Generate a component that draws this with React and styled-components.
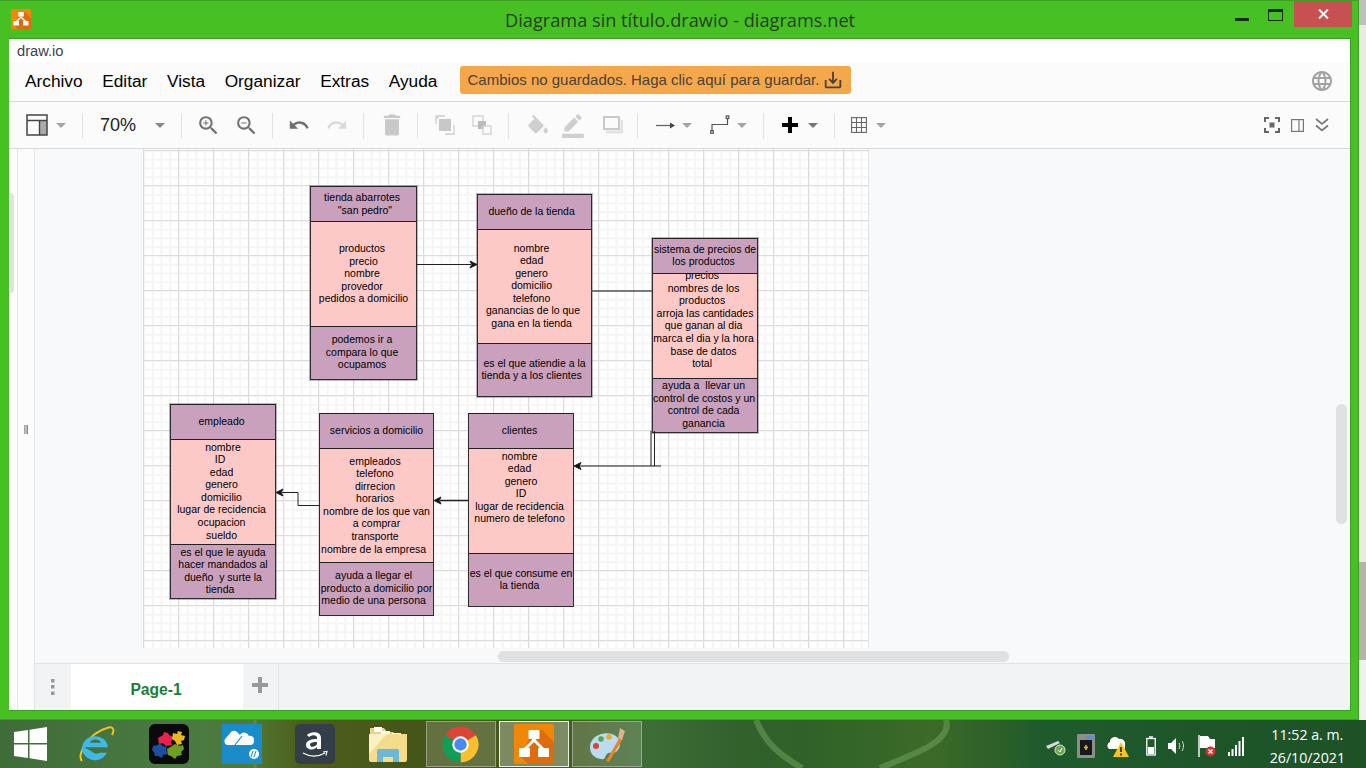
import React from 'react'
import styled, { createGlobalStyle } from 'styled-components'
import {
  MdZoomIn, MdZoomOut, MdUndo, MdRedo, MdDelete, MdBorderColor, MdLanguage, MdSaveAlt,
} from 'react-icons/md'

const GlobalStyle = createGlobalStyle`
  html, body { margin: 0; padding: 0; width: 1366px; height: 768px; overflow: hidden; }
  body { font-family: "Liberation Sans", Arial, sans-serif; }
  * { box-sizing: border-box; }
`

const Screen = styled.div`
  width: 1366px;
  height: 768px;
  display: flex;
  flex-direction: column;
`
const Desktop = styled.div`
  height: 720px;
  display: flex;
`
const Strip = styled.div`
  flex: 1;
  background: linear-gradient(#bfbfbf 0 25px, #ece8e4 25px 562px, #b9b2ac 562px 660px, #f0f0f0 660px);
`
const Window = styled.div`
  width: 1359px;
  display: flex;
  flex-direction: column;
  background: #46c023;
  border: 1px solid #3c9f24;
  border-left-width: 0;
  padding: 0 7px 8px 9px;
`
const TitleBar = styled.div`
  height: 37px;
  flex-shrink: 0;
  display: flex;
  align-items: flex-start;
  position: relative;
`
const AppIcon = styled.div`
  margin: 8px 0 0 2px;
  width: 20px;
  height: 20px;
`
const TitleText = styled.div`
  position: absolute;
  top: 7px;
  left: 496px;
  font-family: "Open Sans", sans-serif;
  font-size: 18.2px;
  line-height: 24px;
  color: #26401c;
  white-space: nowrap;
`
const Controls = styled.div`
  margin-left: auto;
  display: flex;
`
const MinBtn = styled.div`
  width: 14px;
  height: 3px;
  margin-top: 17px;
  margin-right: 19px;
  background: #1c2a18;
`
const MaxBtn = styled.div`
  width: 15px;
  height: 12px;
  margin-top: 8px;
  margin-right: 11px;
  border: 1px solid #1c2a18;
  border-top-width: 3px;
`
const CloseBtn = styled.div`
  width: 58px;
  height: 26px;
  background: #c75050;
  display: flex;
  align-items: center;
  justify-content: center;
  margin-right: -1px;
`
const Client = styled.div`
  flex: 1;
  display: flex;
  flex-direction: column;
  min-height: 0;
  background: #fff;
  border: 1px solid #3c9f24;
  border-width: 1px 1px 1px 0;
`
const UrlRow = styled.div`
  height: 24px;
  flex-shrink: 0;
  padding-left: 8px;
  font-size: 14.7px;
  line-height: 25px;
  color: #3a4350;
  background: #fff;
`
const MenuBar = styled.div`
  height: 39px;
  flex-shrink: 0;
  display: flex;
  align-items: center;
  padding: 0 0 2px 16px;
  gap: 19.6px;
  background: #fbfbfb;
  border-bottom: 1px solid #dadada;
`
const MenuItem = styled.div`
  font-size: 17.3px;
  color: #000;
  white-space: nowrap;
`
const SaveBanner = styled.div`
  width: 391px;
  height: 28px;
  margin-left: 2.5px;
  margin-bottom: 3px;
  padding: 0 7px 0 8px;
  border-radius: 3px;
  background: #f5a84b;
  color: #4a4238;
  font-size: 15px;
  display: flex;
  align-items: center;
  justify-content: space-between;
  white-space: nowrap;
`
const GlobeWrap = styled.div`
  margin-left: auto;
  margin-right: 16px;
  color: #a2a2a2;
  display: flex;
`
const Toolbar = styled.div`
  height: 47px;
  flex-shrink: 0;
  display: flex;
  align-items: center;
  background: #fbfbfb;
  border-bottom: 1px solid #d8d8d8;
`
const Tool = styled.div`
  flex-shrink: 0;
  width: ${p => p.$w}px;
  margin-left: ${p => p.$ml}px;
  height: 26px;
  display: flex;
  align-items: center;
  justify-content: center;
  color: ${p => p.$color || '#c9c9c9'};
  & > svg { flex-shrink: 0; }
`
const Caret = styled.div`
  width: 0;
  height: 0;
  border-left: 5.5px solid transparent;
  border-right: 5.5px solid transparent;
  border-top: 5px solid ${p => p.$color || '#a5a5a5'};
`
const Sep = styled.div`
  width: 1px;
  height: 25px;
  background: #e2e2e2;
`
const ZoomText = styled.div`
  font-size: 18px;
  color: #222;
  white-space: nowrap;
`
const Body = styled.div`
  flex: 1;
  display: flex;
  min-height: 0;
`
const Rail = styled.div`
  width: 9px;
  background: #fff;
  border-right: 1px solid #e4e4e4;
  padding-top: 44px;
`
const RailThumb = styled.div`
  width: 5px;
  height: 100px;
  background: #e2e2e2;
  border-radius: 0 4px 4px 0;
`
const Splitter = styled.div`
  width: 17px;
  background: #fcfcfc;
  border-right: 1px solid #e4e4e4;
  display: flex;
  align-items: center;
  justify-content: center;
`
const Handle = styled.div`
  width: 4px;
  height: 9px;
  background: linear-gradient(90deg, #999, #ccc 50%, #777);
`
const Main = styled.div`
  flex: 1;
  min-width: 0;
  display: flex;
  flex-direction: column;
`
const Canvas = styled.div`
  height: 514px;
  background: #f8f9fa;
  padding-left: 108px;
  position: relative;
  overflow: hidden;
`
const Page = styled.div`
  position: relative;
  width: 726px;
  height: 499px;
  border-left: 1px solid #dcdcdc;
  border-right: 1px solid #e4e4e4;
  background-color: #fff;
  background-image:
    linear-gradient(#dcdcdc 1px, transparent 1px),
    linear-gradient(90deg, #dcdcdc 1px, transparent 1px),
    linear-gradient(#f5f5f5 2px, transparent 2px),
    linear-gradient(90deg, #f5f5f5 2px, transparent 2px);
  background-size: 35px 35px, 35px 35px, 8.75px 8.75px, 8.75px 8.75px;
  background-position: 0 1px, -1px 0, 0 1px, -1px 0;
`
const Node = styled.div`
  position: absolute;
  left: ${p => p.$x - 144}px;
  top: ${p => p.$y - 149}px;
  width: ${p => p.$w}px;
  display: flex;
  flex-direction: column;
  border: 1px solid #2c2c2c;
  border-top: 0;
  outline: ${p => (p.$soft ? '1px solid rgba(60,60,60,.35)' : 'none')};
  color: #000;
  font-size: 10.5px;
  line-height: 12.6px;
  text-align: center;
  white-space: pre;
`
const Section = styled.div`
  height: ${p => p.$h}px;
  flex-shrink: 0;
  background: ${p => (p.$alt ? '#fdc9c7' : '#caa1bc')};
  border-top: 1px solid #222;
`
const Lines = styled.div`
  margin-top: ${p => p.$top - 1}px;
`
const Wires = styled.svg`
  position: absolute;
  left: 0;
  top: 0;
  pointer-events: none;
`
const ScrollV = styled.div`
  position: absolute;
  right: 3px;
  top: 255px;
  width: 11px;
  height: 120px;
  border-radius: 6px;
  background: #dfe1e3;
`
const ScrollH = styled.div`
  position: absolute;
  left: 463px;
  top: 502px;
  width: 511px;
  height: 11px;
  border-radius: 6px;
  background: #dfe1e3;
`
const Footer = styled.div`
  flex: 1;
  display: flex;
  background: #f1f3f4;
  border-top: 1px solid #e2e3e5;
`
const DotsCell = styled.div`
  width: 36px;
  display: flex;
  align-items: center;
  justify-content: center;
`
const PageTab = styled.div`
  width: 172px;
  background: #fff;
  color: #188038;
  font-weight: bold;
  font-size: 15.6px;
  display: flex;
  align-items: center;
  justify-content: center;
  padding: 5px 2px 0 0;
`
const AddCell = styled.div`
  width: 36px;
  border-right: 1px solid #e2e3e5;
  color: #999;
  display: flex;
  justify-content: center;
  padding: 13px 1px 0 0;
`
const Taskbar = styled.div`
  flex: 1;
  position: relative;
  display: flex;
  align-items: center;
  overflow: hidden;
  background: linear-gradient(90deg, #3f6c38 0, #4b7a42 190px, #4f7a35 250px, #4e5f1a 300px, #45561a 400px,
    #47591f 560px, #3f6d38 650px, #33612d 740px, #2f6228 800px, #3c6a28 930px, #2c6028 1000px, #1f5a2d 1040px, #1d5226 1366px);
`
const Backdrop = styled.svg`
  position: absolute;
  left: 0;
  top: 0;
`
const StartCell = styled.div`
  position: relative;
  width: 59px;
  padding-left: 14px;
  display: flex;
`
const Slot = styled.div`
  position: relative;
  width: 73px;
  height: 48px;
  display: flex;
  align-items: center;
  justify-content: center;
`
const ActiveBox = styled.div`
  position: relative;
  width: 70px;
  height: 46px;
  margin: 0 1.5px;
  display: flex;
  align-items: center;
  justify-content: center;
  background: ${p => (p.$focus ? 'rgba(255,255,255,.3)' : 'rgba(255,255,255,.16)')};
  border: 1px solid ${p => (p.$focus ? '#e8efe6' : 'rgba(255,255,255,.35)')};
`
const Tray = styled.div`
  position: relative;
  margin-left: auto;
  display: flex;
  align-items: center;
  padding-top: 4px;
`
const TrayIcon = styled.div`
  margin-left: ${p => p.$ml}px;
  display: flex;
`
const Clock = styled.div`
  margin-left: 26px;
  margin-right: 21px;
  margin-top: -1px;
  color: #fff;
  font-family: "Open Sans", sans-serif;
  font-size: 14.2px;
  line-height: 23px;
  text-align: center;
  white-space: nowrap;
`

const nodes = [
  { x: 310, w: 107, soft: true, ys: [186, 221, 326, 379], blocks: [
    { top: 5, lines: ['tienda abarrotes ', ' "san pedro"'] },
    { top: 21, lines: ['productos ', 'precio', 'nombre ', 'provedor ', 'pedidos a domicilio'] },
    { top: 7, lines: ['podemos ir a ', 'compara lo que ', 'ocupamos '] },
  ] },
  { x: 477, w: 115, soft: true, ys: [194, 229, 343, 396], blocks: [
    { top: 10.5, lines: ['dueño de la tienda  '] },
    { top: 12.5, lines: ['nombre  ', 'edad  ', 'genero  ', 'domicilio  ', 'telefono  ', 'ganancias de lo que ', 'gana en la tienda  '] },
    { top: 13.5, lines: ['es el que atiendie a la', 'tienda y a los clientes  '] },
  ] },
  { x: 652, w: 106, soft: true, ys: [238, 273, 378, 432], blocks: [
    { top: 4.5, lines: ['sistema de precios de', 'los productos '] },
    { top: -4, lines: ['precios  ', 'nombres de los ', 'productos  ', 'arroja las cantidades', 'que ganan al dia ', 'marca el dia y la hora ', 'base de datos ', 'total  '] },
    { top: 1, lines: ['ayuda a  llevar un ', 'control de costos y un ', 'control de cada ', 'ganancia '] },
  ] },
  { x: 170, w: 106, soft: true, ys: [404, 439, 544, 598], blocks: [
    { top: 10.5, lines: ['empleado '] },
    { top: 1.5, lines: ['nombre', 'ID  ', 'edad ', 'genero ', 'domicilio ', 'lugar de recidencia ', 'ocupacion ', 'sueldo '] },
    { top: 1.5, lines: ['es el que le ayuda', 'hacer mandados al', 'dueño  y surte la', 'tienda  '] },
  ] },
  { x: 319, w: 115, ys: [413, 448, 562, 615], blocks: [
    { top: 10.5, lines: ['servicios a domicilio'] },
    { top: 6.5, lines: ['empleados ', 'telefono ', 'dirrecion ', 'horarios ', 'nombre de los que van', 'a comprar', 'transporte ', 'nombre de la empresa  '] },
    { top: 7, lines: ['ayuda a llegar el  ', 'producto a domicilio por', 'medio de una persona  '] },
  ] },
  { x: 468, w: 106, ys: [413, 448, 553, 606], blocks: [
    { top: 10.5, lines: ['clientes '] },
    { top: 1.5, lines: ['nombre ', 'edad ', 'genero', 'ID', 'lugar de recidencia ', 'numero de telefono '] },
    { top: 13.5, lines: ['es el que consume en', 'la tienda '] },
  ] },
]

const ArrowHead = ({ x, y, dir }) => (
  <path
    d={dir === 'r'
      ? `M${x} ${y}l-7 -3.5 1.8 3.5 -1.8 3.5z`
      : `M${x} ${y}l7 -3.5 -1.8 3.5 1.8 3.5z`}
    fill="#111"
  />
)

const LayoutIcon = () => (
  <svg width="22" height="22" viewBox="0 0 22 22">
    <rect x="14" y="6" width="7" height="15" fill="#aaa" />
    <rect x="1" y="1" width="20" height="20" fill="none" stroke="#444" strokeWidth="1.5" />
    <path d="M1 6.5h20M13.5 6.5V21" stroke="#444" strokeWidth="1.4" />
  </svg>
)
const ToFrontIcon = () => (
  <svg width="20" height="20" viewBox="0 0 20 20" fill="none" stroke="#d0d0d0" strokeWidth="1.3">
    <path d="M1 9V1h9M10 19h9v-9" />
    <path d="M1 3h2M3 1v2" />
    <rect x="4" y="4" width="12" height="12" fill="#c8c8c8" stroke="none" />
  </svg>
)
const ToBackIcon = () => (
  <svg width="20" height="20" viewBox="0 0 20 20" fill="none" stroke="#d0d0d0" strokeWidth="1.3">
    <rect x="1" y="1" width="10" height="10" fill="#fbfbfb" />
    <rect x="6" y="6" width="8" height="8" fill="#bbb" stroke="none" />
    <rect x="11" y="11" width="8" height="8" fill="#fbfbfb" />
  </svg>
)
const FillIcon = () => (
  <svg width="24" height="22" viewBox="0 0 22 19">
    <path fill="#cfcfcf" d="M16.56 8.94L7.62 0 6.21 1.41l2.38 2.38-5.15 5.15c-.59.59-.59 1.54 0 2.12l5.5 5.5c.29.29.68.44 1.06.44s.77-.15 1.06-.44l5.5-5.5c.59-.58.59-1.53 0-2.12zM19 11.5s-2 2.17-2 3.5c0 1.1.9 2 2 2s2-.9 2-2c0-1.33-2-3.5-2-3.5z" />
  </svg>
)
const ShadowIcon = () => (
  <svg width="20" height="18" viewBox="0 0 20 18" fill="none">
    <path d="M3 16h16V4" stroke="#e2e2e2" strokeWidth="3" />
    <rect x="1" y="1" width="15" height="12" stroke="#c9c9c9" strokeWidth="2" fill="#fbfbfb" />
  </svg>
)
const ArrowIcon = () => (
  <svg width="19" height="9" viewBox="0 0 19 9">
    <path d="M0 4.5h15" stroke="#666" strokeWidth="1.3" />
    <path d="M19 4.5l-5 -3v6z" fill="#444" />
  </svg>
)
const WaypointIcon = () => (
  <svg width="20" height="20" viewBox="0 0 20 20" fill="none" stroke="#555" strokeWidth="1.2">
    <path d="M2 16V9.5h15.5V3.5" />
    <rect x="0.7" y="15.7" width="2.6" height="2.6" />
    <rect x="16.2" y="0.9" width="2.6" height="2.6" />
  </svg>
)
const PlusIcon = () => (
  <svg width="16" height="16" viewBox="0 0 16 16" fill="currentColor">
    <path d="M6 0h4v6h6v4h-6v6H6v-6H0V6h6z" />
  </svg>
)
const TableIcon = () => (
  <svg width="16" height="16" viewBox="0 0 16 16" fill="none" stroke="#666" strokeWidth="1.1">
    <rect x="0.6" y="0.6" width="14.8" height="14.8" />
    <path d="M5.5 .6v14.8M10.5 .6v14.8M.6 5.5h14.8M.6 10.5h14.8" />
  </svg>
)
const FocusIcon = () => (
  <svg width="16" height="16" viewBox="0 0 16 16" fill="none" stroke="#666" strokeWidth="2">
    <path d="M1 5V1h4M11 1h4v4M1 11v4h4M15 11v4h-4" />
    <rect x="5.5" y="5.5" width="5" height="5" fill="#666" stroke="none" />
  </svg>
)
const PanelIcon = () => (
  <svg width="13" height="13" viewBox="0 0 13 13" fill="none" stroke="#777" strokeWidth="1.2">
    <rect x="0.6" y="0.6" width="11.8" height="11.8" />
    <path d="M8 .6v11.8" />
  </svg>
)
const ChevronsIcon = () => (
  <svg width="14" height="14" viewBox="0 0 14 14" fill="none" stroke="#777" strokeWidth="1.7">
    <path d="M1 1l6 5 6-5M1 7.5l6 5 6-5" />
  </svg>
)

// at = screen x of the tool's left edge, margins are worked out from it
const tools = [
  { at: 26, w: 21, el: <LayoutIcon /> },
  { at: 55, w: 11, el: <Caret /> },
  { at: 82, w: 1, el: <Sep /> },
  { at: 100, w: 36, el: <ZoomText>70%</ZoomText> },
  { at: 154, w: 11, el: <Caret $color="#8a8a8a" /> },
  { at: 181, w: 1, el: <Sep /> },
  { at: 199, w: 19, color: '#707070', el: <MdZoomIn size={25} /> },
  { at: 237, w: 19, color: '#707070', el: <MdZoomOut size={25} /> },
  { at: 272, w: 1, el: <Sep /> },
  { at: 289, w: 20, color: '#707070', el: <MdUndo size={22} /> },
  { at: 327, w: 20, color: '#d9d9d9', el: <MdRedo size={22} /> },
  { at: 363, w: 1, el: <Sep /> },
  { at: 382, w: 20, el: <MdDelete size={28} /> },
  { at: 417, w: 1, el: <Sep /> },
  { at: 435, w: 20, el: <ToFrontIcon /> },
  { at: 472, w: 20, el: <ToBackIcon /> },
  { at: 508, w: 1, el: <Sep /> },
  { at: 526, w: 22, el: <FillIcon /> },
  { at: 560, w: 26, color: '#cfcfcf', el: <MdBorderColor size={26} /> },
  { at: 603, w: 20, el: <ShadowIcon /> },
  { at: 637, w: 1, el: <Sep /> },
  { at: 656, w: 19, el: <ArrowIcon /> },
  { at: 681, w: 11, el: <Caret /> },
  { at: 710, w: 20, el: <WaypointIcon /> },
  { at: 736, w: 11, el: <Caret /> },
  { at: 763, w: 1, el: <Sep /> },
  { at: 780, w: 20, color: '#000', el: <PlusIcon /> },
  { at: 807, w: 11, el: <Caret $color="#777" /> },
  { at: 834, w: 1, el: <Sep /> },
  { at: 851, w: 16, el: <TableIcon /> },
  { at: 875, w: 11, el: <Caret /> },
  { at: 1264, w: 16, el: <FocusIcon /> },
  { at: 1291, w: 13, el: <PanelIcon /> },
  { at: 1315, w: 14, el: <ChevronsIcon /> },
]

const DrawioLogo = ({ size }) => (
  <svg width={size} height={size} viewBox="0 0 40 40">
    <rect width="40" height="40" rx="2" fill="#f08705" />
    <path d="M40 18L28 6H16v8l-6 10-4 8 8 8h24a2 2 0 0 0 2-2z" fill="#df6c0c" />
    <g fill="#fff">
      <rect x="14.5" y="6" width="11" height="9" rx="1" />
      <rect x="5" y="24" width="11" height="9" rx="1" />
      <rect x="24" y="24" width="11" height="9" rx="1" />
      <path d="M18 15h4v1l8 8h-4l-6-6-6 6h-4l8-8z" />
    </g>
  </svg>
)
const WindowsLogo = () => (
  <svg width="33" height="34" viewBox="0 0 33 34" fill="#fff">
    <path d="M0 5l14-2v13H0zM15.500 2.800L33 0v16H15.500zM0 17.500h14V31L0 29zM15.500 17.500H33V34l-17.500-2.800z" />
  </svg>
)
const IeLogo = () => (
  <svg width="38" height="38" viewBox="0 0 38 38" fill="none">
    <path d="M5 36C-1 30 12 8 30 3c6-2 8 1 5 7" stroke="#f2c318" strokeWidth="2" />
    <path d="M9 21h24a13 13 0 1 0-1 6h-7a7 7 0 0 1-9-2zM15 16a6 6 0 0 1 11 0z" fill="#3fb8ea" fillRule="evenodd" transform="translate(-2 3) scale(1 .92)" />
  </svg>
)
const PuzzleLogo = () => (
  <svg width="40" height="40" viewBox="0 0 40 40">
    <rect width="40" height="40" rx="6" fill="#0a0a0a" />
    <path d="M9 14l5-3 1-3 4 1 1 2 5 2-3 5 1 3-6 1-3-3-4 1z" fill="#e8214f" />
    <path d="M24 9l4 1 1-3 4 1-1 3 4 1-1 4-3 1 1 3-5 1-2-4-3-2z" fill="#e9b81c" />
    <path d="M4 22l5-1 1-2 4 3 4 1-1 3 2 4-5 1-1 3-4-2-3 0-1-4-2-2z" fill="#1c4e9e" />
    <path d="M18 25l5-3 3-2 5 2 3-1 1 4-3 3 1 3-5 1-2 3-4-3-3-1z" fill="#6f9f22" />
  </svg>
)
const HpCloud = () => (
  <svg width="40" height="40" viewBox="0 0 40 40">
    <rect width="40" height="40" fill="#1a8cca" />
    <path d="M5 21a4 4 0 0 1-1-7l5-6a4 4 0 0 1 6 0l3 3a5 5 0 0 1 9 1 4 4 0 0 1 5 5 4 4 0 0 1-3 4z" fill="#fff" />
    <path d="M13 21l7-9" stroke="#1a8cca" strokeWidth="1.200" />
    <circle cx="32" cy="30" r="5" fill="#fff" />
    <path d="M31 27l-2 6M34 27l-2 6" stroke="#1a8cca" strokeWidth="1" />
  </svg>
)
const AmazonLogo = () => (
  <svg width="40" height="40" viewBox="0 0 40 40">
    <rect width="40" height="40" rx="5" fill="#333e48" />
    <path d="M12 11c4-4 14-4 14 3v11h-4v-2c-3 4-11 3-11-2 0-5 6-6 11-6 1-4-4-5-8-2zM22 18c-3 0-7 0-7 3 0 3 6 2 7-1z" fill="#fff" fillRule="evenodd" />
    <path d="M8 29c7 4 15 4 22 0" stroke="#fff" strokeWidth="1.3" fill="none" />
    <path d="M28 28l4-.5-1 4" stroke="#fff" strokeWidth="1.1" fill="none" />
  </svg>
)
const FolderLogo = () => (
  <svg width="40" height="40" viewBox="0 0 40 40">
    <path d="M2 4h14l3 4h6l2 2H2z" fill="#e9d28c" />
    <rect x="6" y="3" width="8" height="5" fill="#fff" />
    <rect x="13" y="7" width="9" height="5" fill="#fff" />
    <rect x="24" y="9" width="9" height="5" fill="#fff" />
    <path d="M1 10h38v26a2 2 0 0 1-2 2H3a2 2 0 0 1-2-2z" fill="#f4dc8c" />
    <path d="M1 10h18L1 30z" fill="#fbf1c2" />
    <path d="M9 38V27a2 2 0 0 1 2-2h18a2 2 0 0 1 2 2v11h-6v-5H15v5z" fill="#6cb8d8" />
  </svg>
)
const ChromeLogo = () => (
  <svg width="37" height="37" viewBox="0 0 36 36">
    <path d="M18 18L3 9a17.500 17.500 0 0 1 30 0z" fill="#db4437" />
    <path d="M18 18l15-9a17.500 17.500 0 0 1-15 26.500z" fill="#fbc02d" />
    <path d="M18 18v17.500A17.500 17.500 0 0 1 3 9z" fill="#0f9d58" />
    <circle cx="18" cy="18" r="8" fill="#fff" />
    <circle cx="18" cy="18" r="6" fill="#4a87ee" />
  </svg>
)
const PaintLogo = () => (
  <svg width="38" height="38" viewBox="0 0 38 38">
    <path d="M2 22C2 12 14 6 24 9c9 3 10 12 5 17-4 4-7 0-10 3s-1 6-6 5C6 33 2 29 2 22z" fill="#b9dcf0" />
    <circle cx="8" cy="21" r="3" fill="#d8423a" />
    <circle cx="13" cy="14" r="2.800" fill="#54a84a" />
    <circle cx="21" cy="12" r="2.800" fill="#f0a828" />
    <path d="M18 36l14-24 3 1.500L21 37z" fill="#e8832a" />
    <path d="M30 13l2-10 5 3-3 9z" fill="#d9b48c" />
  </svg>
)
const UsbIcon = () => (
  <svg width="22" height="22" viewBox="0 0 22 22">
    <path d="M1 11l12-5 2 2-12 6z" fill="#d8d8d8" />
    <circle cx="15" cy="15" r="5" fill="#6aa84f" stroke="#d8e8d0" strokeWidth="1" />
    <path d="M13 15l2 2 2-4" stroke="#fff" fill="none" />
  </svg>
)
const CamIcon = () => (
  <svg width="18" height="24" viewBox="0 0 18 24">
    <rect width="18" height="24" rx="1" fill="#8a9088" />
    <rect x="3" y="6" width="12" height="15" fill="#16181a" />
    <rect x="10" y="2" width="6" height="3" fill="#5a8fd8" />
    <path d="M9 11v5M7 13.500h4" stroke="#e8b830" strokeWidth="1.500" />
  </svg>
)
const CloudWarnIcon = () => (
  <svg width="23" height="24" viewBox="0 0 23 24">
    <path d="M2 15a4 4 0 0 1 1-7 5 5 0 0 1 9-3 5 5 0 0 1 6 6v4z" fill="#fff" />
    <path d="M14 8l8 15H6z" fill="#f5c518" />
    <path d="M14 13v5M14 19.500v2" stroke="#222" strokeWidth="1.600" />
  </svg>
)
const BatteryIcon = () => (
  <svg width="10" height="20" viewBox="0 0 10 20" fill="none">
    <path d="M3 1h4" stroke="#fff" strokeWidth="1.500" />
    <rect x=".8" y="2.500" width="8.400" height="16.500" stroke="#fff" strokeWidth="1.300" />
    <rect x="2" y="11" width="6" height="7" fill="#fff" />
  </svg>
)
const VolumeIcon = () => (
  <svg width="20" height="20" viewBox="0 0 20 20" fill="none">
    <path d="M1 7h3l5-5v16l-5-5H1z" fill="#fff" />
    <path d="M12 7c1 2 1 4 0 6M15 5c2 3 2 7 0 10" stroke="#ddd" strokeWidth="1" />
  </svg>
)
const FlagIcon = () => (
  <svg width="18" height="24" viewBox="0 0 18 24">
    <path d="M1 1v22" stroke="#fff" strokeWidth="1.400" />
    <path d="M2 2h8l2 3h5v9H2z" fill="#fff" />
    <circle cx="12.500" cy="17.500" r="5" fill="#d92d2d" />
    <path d="M10.500 15.500l4 4M14.500 15.500l-4 4" stroke="#fff" strokeWidth="1.400" />
  </svg>
)
const SignalIcon = () => (
  <svg width="16" height="20" viewBox="0 0 16 20" fill="#fff">
    <path d="M0 16h2v4H0zM3.500 13h2v7h-2zM7 9h2v11H7zM10.500 5h2v15h-2zM14 1h2v19h-2z" />
  </svg>
)

export default function App() {
  return (
    <Screen>
      <GlobalStyle />
      <Desktop>
        <Window>
          <TitleBar>
            <AppIcon><DrawioLogo size={20} /></AppIcon>
            <TitleText>Diagrama sin título.drawio - diagrams.net</TitleText>
            <Controls>
              <MinBtn />
              <MaxBtn />
              <CloseBtn>
                <svg width="11" height="10" viewBox="0 0 11 10">
                  <path d="M1 .5l9 9M10 .5l-9 9" stroke="#fff" strokeWidth="2" />
                </svg>
              </CloseBtn>
            </Controls>
          </TitleBar>
          <Client>
            <UrlRow>draw.io</UrlRow>
            <MenuBar>
              <MenuItem>Archivo</MenuItem>
              <MenuItem>Editar</MenuItem>
              <MenuItem>Vista</MenuItem>
              <MenuItem>Organizar</MenuItem>
              <MenuItem>Extras</MenuItem>
              <MenuItem>Ayuda</MenuItem>
              <SaveBanner>
                Cambios no guardados. Haga clic aquí para guardar.
                <MdSaveAlt size={22} />
              </SaveBanner>
              <GlobeWrap><MdLanguage size={24} /></GlobeWrap>
            </MenuBar>
            <Toolbar>
              {tools.map((t, i) => {
                const prev = tools[i - 1]
                const end = prev ? prev.at + prev.w : 9
                return <Tool key={t.at} $w={t.w} $ml={t.at - end} $color={t.color}>{t.el}</Tool>
              })}
            </Toolbar>
            <Body>
              <Rail><RailThumb /></Rail>
              <Splitter><Handle /></Splitter>
              <Main>
                <Canvas>
                  <Page>
                    {nodes.map(n => (
                      <Node key={n.x} $x={n.x} $y={n.ys[0]} $w={n.w} $soft={n.soft}>
                        {n.blocks.map((b, i) => (
                          <Section key={i} $alt={i === 1} $h={n.ys[i + 1] - n.ys[i]}>
                            <Lines $top={b.top}>
                              {b.lines.map((l, j) => <div key={j}>{l}</div>)}
                            </Lines>
                          </Section>
                        ))}
                      </Node>
                    ))}
                    <Wires width="724" height="499" viewBox="144 149 724 499" fill="none" stroke="#222">
                      <path d="M416 264.500H471" />
                      <ArrowHead x={477} y={264.500} dir="r" />
                      <path d="M591 291H652" stroke="#555" strokeWidth="1.500" />
                      <path d="M651 431V466M654.500 431V466M661 466H580" />
                      <ArrowHead x={574} y={466} dir="l" />
                      <path d="M468 500.500H440" strokeWidth="1.500" />
                      <ArrowHead x={434} y={500.500} dir="l" />
                      <path d="M319 505.500H298V492.500H282" />
                      <ArrowHead x={276} y={492.500} dir="l" />
                    </Wires>
                  </Page>
                  <ScrollV />
                  <ScrollH />
                </Canvas>
                <Footer>
                  <DotsCell>
                    <svg width="4" height="16" viewBox="0 0 4 16" fill="#999">
                      <rect width="3.500" height="3.500" />
                      <rect y="6" width="3.500" height="3.500" />
                      <rect y="12.500" width="3.500" height="3.500" />
                    </svg>
                  </DotsCell>
                  <PageTab>Page-1</PageTab>
                  <AddCell><PlusIcon /></AddCell>
                </Footer>
              </Main>
            </Body>
          </Client>
        </Window>
        <Strip />
      </Desktop>
      <Taskbar>
        <Backdrop width="1366" height="48" viewBox="0 0 1366 48" fill="none">
          <path d="M756 0c6 14 14 30 46 48M946 0c6 20-26 32-66 48" stroke="#6fa05c" strokeWidth="6" opacity=".55" />
          <path d="M255 0v48" stroke="#7fa36a" strokeWidth="3" opacity=".35" />
        </Backdrop>
        <StartCell><WindowsLogo /></StartCell>
        <Slot><IeLogo /></Slot>
        <Slot><PuzzleLogo /></Slot>
        <Slot><HpCloud /></Slot>
        <Slot><AmazonLogo /></Slot>
        <Slot><FolderLogo /></Slot>
        <ActiveBox><ChromeLogo /></ActiveBox>
        <ActiveBox $focus><DrawioLogo size={40} /></ActiveBox>
        <ActiveBox><PaintLogo /></ActiveBox>
        <Tray>
          <TrayIcon $ml={0}><UsbIcon /></TrayIcon>
          <TrayIcon $ml={10}><CamIcon /></TrayIcon>
          <TrayIcon $ml={12}><CloudWarnIcon /></TrayIcon>
          <TrayIcon $ml={16}><BatteryIcon /></TrayIcon>
          <TrayIcon $ml={11}><VolumeIcon /></TrayIcon>
          <TrayIcon $ml={11}><FlagIcon /></TrayIcon>
          <TrayIcon $ml={12}><SignalIcon /></TrayIcon>
          <Clock>11:52 a. m.<br />26/10/2021</Clock>
        </Tray>
      </Taskbar>
    </Screen>
  )
}
